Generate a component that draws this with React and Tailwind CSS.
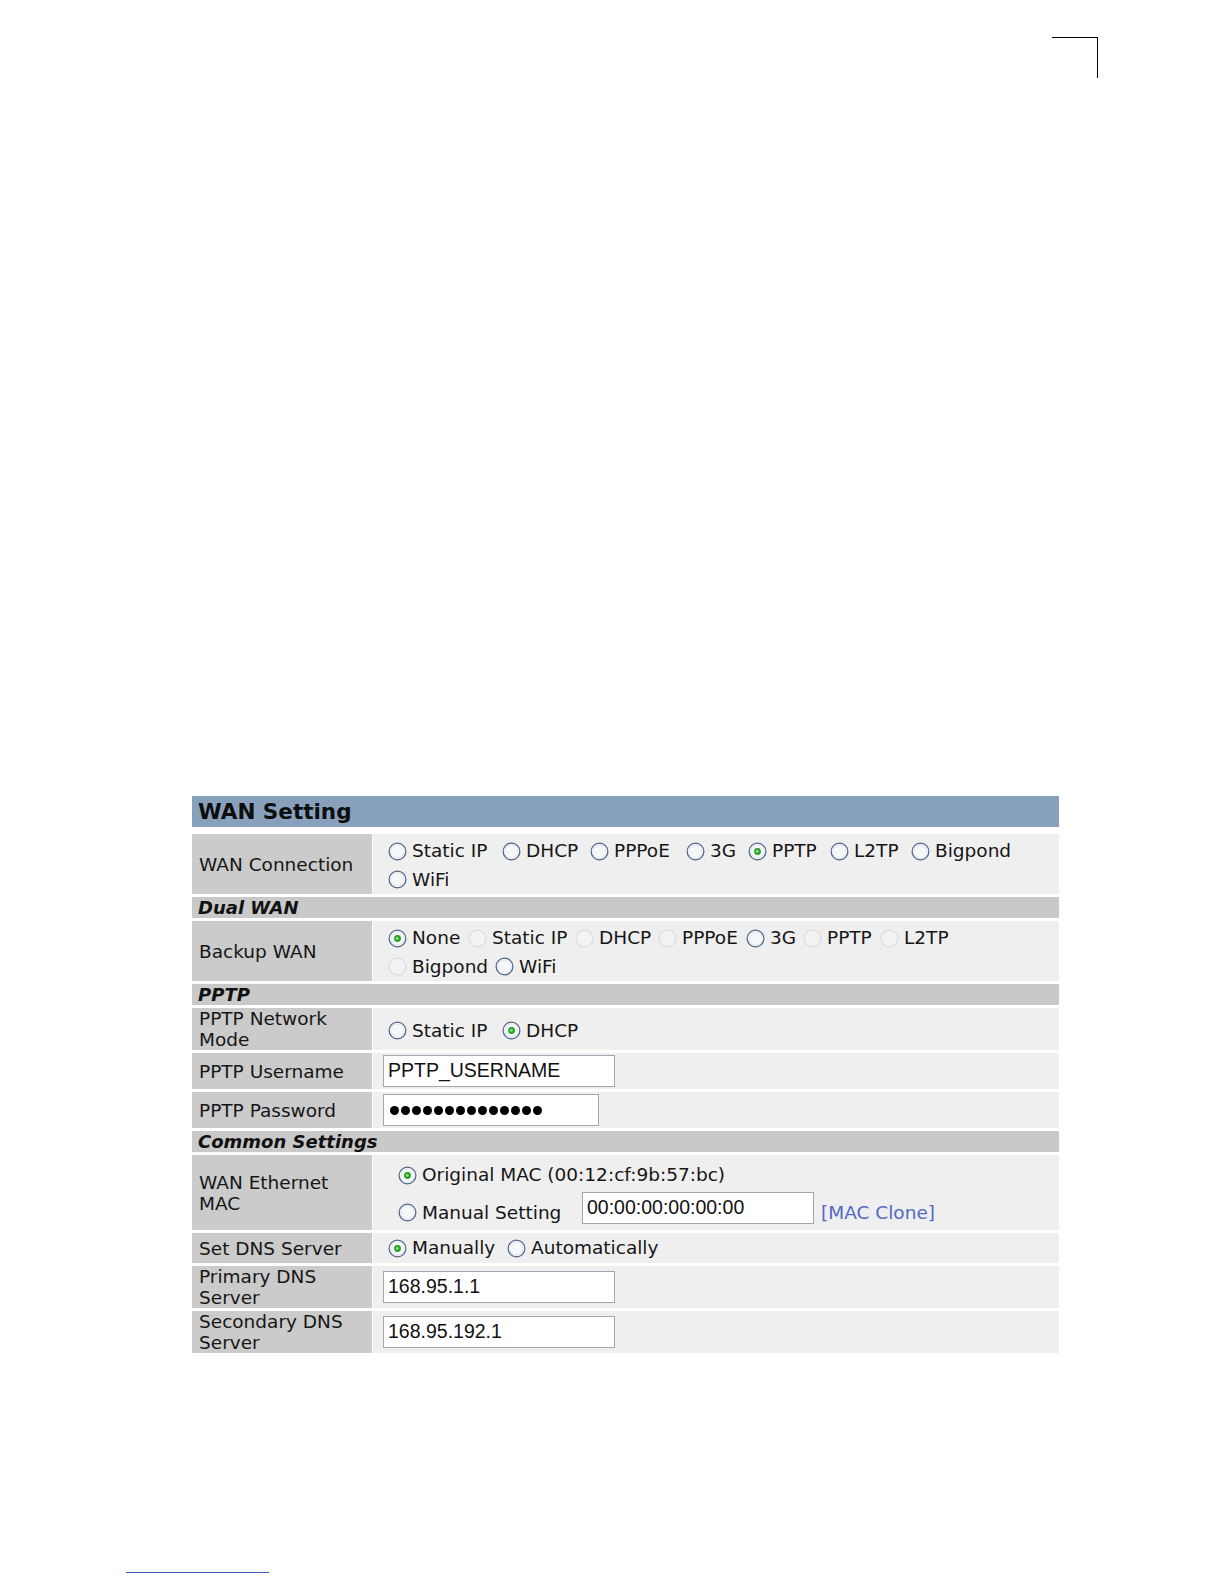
import React from 'react';
import clsx from 'clsx';

const Radio = ({ checked, disabled }) => (
  <svg width="19" height="19" viewBox="0 0 19 19" className="shrink-0">
    <circle
      cx="9.5"
      cy="9.5"
      r="8.4"
      fill={disabled ? '#f3f3f3' : '#f6f7f9'}
      stroke={disabled ? '#dcdcdc' : '#4b6585'}
      strokeWidth="1.2"
    />
    {!disabled && <circle cx="9.5" cy="9.5" r="6.6" fill="none" stroke="#e2e6ec" strokeWidth="1" />}
    {checked && (
      <>
        <circle cx="9.5" cy="9.5" r="3.4" fill="#24a024" />
        <circle cx="9.2" cy="9.2" r="1.5" fill="#7ee27e" />
      </>
    )}
  </svg>
);

const Opt = ({ label, checked, disabled, w }) => (
  <div className={clsx('flex items-center shrink-0', w)}>
    <Radio checked={checked} disabled={disabled} />
    <span className="ml-[5px] whitespace-nowrap">{label}</span>
  </div>
);

const Field = ({ value, w, children }) => (
  <div
    className={clsx(
      'h-[32px] bg-white border border-[#a3a7ad] flex items-center pl-[4px] shrink-0',
      "font-['Liberation_Sans',Arial,sans-serif] text-[19.5px] text-[#111]",
      w
    )}
  >
    {children || value}
  </div>
);

const Section = ({ title }) => (
  <div className="h-[21px] bg-[#c9c9c9] pl-[6px] leading-[21px] text-[18px] font-bold italic text-[#111]">
    {title}
  </div>
);

const Row = ({ label, h, children, cell }) => (
  <div className={clsx('flex gap-[1px]', h)}>
    <div className="w-[180px] shrink-0 bg-[#cbcbcb] flex items-center pl-[7px] leading-[21px]">
      <span>{label}</span>
    </div>
    <div className={clsx('flex-1 bg-[#efefef]', cell)}>{children}</div>
  </div>
);

export default function App() {
  return (
    <div className="w-[1224px] h-[1584px] bg-white overflow-hidden text-[#161616] font-['DejaVu_Sans',Verdana,sans-serif] text-[18.5px]">
      {/* crop mark */}
      <div className="flex justify-end pt-[37px] pr-[126px]">
        <div className="w-[46px] h-[41px] border-t border-r border-black" />
      </div>

      <div className="mt-[718px] ml-[192px] w-[867px]">
        <div className="h-[31px] bg-[#87a0bb] pl-[6px] leading-[31px] text-[21.5px] font-bold text-[#0d0d0d] mb-[7px]">
          WAN Setting
        </div>

        <div className="flex flex-col gap-[3px]">
          <Row label="WAN Connection" h="h-[60px]" cell="pl-[15px] pt-[3px] flex flex-col">
            <div className="flex items-center h-[29px]">
              <Opt label="Static IP" w="w-[114px]" />
              <Opt label="DHCP" w="w-[88px]" />
              <Opt label="PPPoE" w="w-[96px]" />
              <Opt label="3G" w="w-[62px]" />
              <Opt label="PPTP" checked w="w-[82px]" />
              <Opt label="L2TP" w="w-[81px]" />
              <Opt label="Bigpond" />
            </div>
            <div className="flex items-center h-[29px]">
              <Opt label="WiFi" />
            </div>
          </Row>

          <Section title="Dual WAN" />

          <Row label="Backup WAN" h="h-[60px]" cell="pl-[15px] pt-[3px] flex flex-col">
            <div className="flex items-center h-[29px]">
              <Opt label="None" checked w="w-[80px]" />
              <Opt label="Static IP" disabled w="w-[107px]" />
              <Opt label="DHCP" disabled w="w-[83px]" />
              <Opt label="PPPoE" disabled w="w-[88px]" />
              <Opt label="3G" w="w-[57px]" />
              <Opt label="PPTP" disabled w="w-[77px]" />
              <Opt label="L2TP" disabled />
            </div>
            <div className="flex items-center h-[29px]">
              <Opt label="Bigpond" disabled w="w-[107px]" />
              <Opt label="WiFi" />
            </div>
          </Row>

          <Section title="PPTP" />

          <Row label={<>PPTP Network<br />Mode</>} h="h-[42px]" cell="pl-[15px] pt-[3px] flex items-center">
            <Opt label="Static IP" w="w-[114px]" />
            <Opt label="DHCP" checked />
          </Row>

          <Row label="PPTP Username" h="h-[36px]" cell="pl-[10px] pt-[2px]">
            <Field value="PPTP_USERNAME" w="w-[232px]" />
          </Row>

          <Row label="PPTP Password" h="h-[36px]" cell="pl-[10px] pt-[2px]">
            <Field w="w-[216px]">
              <div className="flex gap-[2px] pl-[2px]">
                {Array.from({ length: 14 }).map((_, i) => (
                  <div key={i} className="w-[9px] h-[9px] rounded-full bg-black" />
                ))}
              </div>
            </Field>
          </Row>

          <Section title="Common Settings" />

          <Row label={<>WAN Ethernet<br />MAC</>} h="h-[75px]" cell="pl-[25px] flex flex-col">
            <div className="flex items-center h-[21px] mt-[9.5px]">
              <Opt label="Original MAC (00:12:cf:9b:57:bc)" checked />
            </div>
            <div className="flex items-end h-[32px] mt-[6.5px]">
              <div className="h-[21px] mb-[1px] flex items-center">
                <Opt label="Manual Setting" w="w-[184px]" />
              </div>
              <Field value="00:00:00:00:00:00" w="w-[232px]" />
              <span className="ml-[7px] mb-[1px] leading-[21px] text-[#5468c4] whitespace-nowrap">[MAC Clone]</span>
            </div>
          </Row>

          <Row label="Set DNS Server" h="h-[30px]" cell="pl-[15px] flex items-center">
            <Opt label="Manually" checked w="w-[119px]" />
            <Opt label="Automatically" />
          </Row>

          <Row label={<>Primary DNS<br />Server</>} h="h-[42px]" cell="pl-[10px] flex items-center">
            <Field value="168.95.1.1" w="w-[232px]" />
          </Row>

          <Row label={<>Secondary DNS<br />Server</>} h="h-[42px]" cell="pl-[10px] flex items-center">
            <Field value="168.95.192.1" w="w-[232px]" />
          </Row>
        </div>
      </div>

      <div className="mt-[219px] ml-[126px] w-[143px] h-[1px] bg-[#3a5bc7]" />
    </div>
  );
}
